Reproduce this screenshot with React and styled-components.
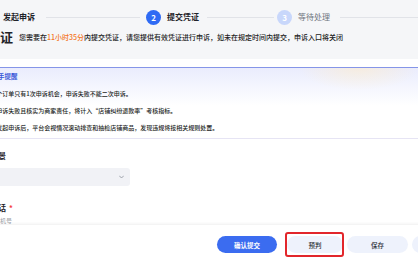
import styled, { createGlobalStyle } from 'styled-components';

const GlobalStyle = createGlobalStyle`
  html, body {
    margin: 0;
    padding: 0;
  }
  body {
    width: 418px;
    height: 258px;
    overflow: hidden;
    background: #f5f6f8;
    font-family: "Noto Sans CJK SC", "Noto Sans", sans-serif;
    color: #1f2329;
  }
  #root {
    width: 418px;
    height: 258px;
    overflow: hidden;
  }
`;

// the page is scrolled sideways, so its left edge sits off screen
const Page = styled.div`
  display: flex;
  flex-direction: column;
  width: 540px;
  height: 258px;
  margin-left: -48px;
`;

const Header = styled.header`
  box-sizing: border-box;
  height: 59px;
  padding: 9px 0 0 9px;
  display: flex;
  flex-direction: column;
  gap: 4px;
`;

const Steps = styled.div`
  display: flex;
  align-items: center;
  height: 16px;
  padding-left: 21px;
`;

const Step = styled.div`
  display: flex;
  align-items: center;
  gap: 6px;
  flex-shrink: 0;
`;

const Circle = styled.span`
  width: 15px;
  height: 15px;
  border-radius: 50%;
  background: ${(p) => p.$bg};
  color: #fff;
  font-size: 8px;
  font-weight: 700;
  display: flex;
  align-items: center;
  justify-content: center;
`;

const StepText = styled.span`
  font-size: 8px;
  line-height: 10px;
  font-weight: ${(p) => (p.$muted ? 400 : 700)};
  color: ${(p) => (p.$muted ? '#6f747e' : '#1f2329')};
`;

const Connector = styled.span`
  height: 1px;
  background: #e1e3e8;
  flex-shrink: 0;
  width: ${(p) => p.$w}px;
  margin: 0 ${(p) => p.$mr}px 0 ${(p) => p.$ml}px;
`;

const TitleRow = styled.div`
  display: flex;
  align-items: center;
  gap: 6px;
`;

const Heading = styled.h2`
  margin: 0;
  font-size: 13px;
  line-height: 16px;
  font-weight: 700;
  white-space: nowrap;
`;

const Desc = styled.p`
  margin: 0;
  font-size: 7px;
  line-height: 10px;
  font-weight: 500;
  color: #222;
  white-space: nowrap;
`;

const Countdown = styled.span`
  color: #f47524;
`;

const Card = styled.main`
  flex: 1;
  background: #fff;
  padding: 8px 0 0 16px;
  overflow: hidden;
`;

const Notice = styled.section`
  width: 520px;
  box-sizing: border-box;
  border: 1px solid #e6e4f4;
  border-top: 1px solid #8595e8;
  border-radius: 3px;
  padding: 0 0 2px 16px;
  background:
    radial-gradient(ellipse 60px 22px at 390px 0, rgba(255, 236, 200, 0.55), rgba(255, 255, 255, 0)),
    linear-gradient(180deg, #eaecfd 0%, #ffffff 38px);
`;

const NoticeTitle = styled.div`
  font-size: 6.5px;
  line-height: 17px;
  font-weight: 700;
  color: #3656d8;
  white-space: nowrap;
`;

const NoticeList = styled.ol`
  margin: 0;
  padding: 0;
  list-style: none;
`;

const NoticeItem = styled.li`
  font-size: 6px;
  line-height: 17px;
  font-weight: 500;
  color: #1a1d22;
  white-space: nowrap;
`;

const Form = styled.form`
  display: flex;
  flex-direction: column;
  padding: 12px 0 0 8px;
`;

const Label = styled.label`
  font-size: 7.5px;
  line-height: 10px;
  font-weight: 700;
  color: #1f2329;
  white-space: nowrap;
  margin-top: ${(p) => p.$mt || 0}px;
`;

const Star = styled.span`
  color: #f53f3f;
  margin-left: 3px;
`;

const Select = styled.div`
  width: 154px;
  height: 18px;
  margin-top: 7px;
  border-radius: 3px;
  background: #f1f2f6;
  display: flex;
  align-items: center;
  justify-content: flex-end;
  padding-right: 6px;
  box-sizing: border-box;
  color: #8a8f99;
`;

const Input = styled.input`
  margin-top: 3px;
  width: 160px;
  height: 9px;
  padding: 0;
  border: none;
  outline: none;
  background: transparent;
  font-family: inherit;
  font-size: 6px;
  line-height: 9px;
  &::placeholder {
    color: #9a9ea6;
  }
`;

const Footer = styled.footer`
  height: 33px;
  box-sizing: border-box;
  background: #fff;
  box-shadow: 0 -1px 3px rgba(0, 0, 0, 0.07);
  display: flex;
  align-items: flex-start;
  gap: 4px;
  padding: 11px 0 0 265px;
  position: relative;
`;

const Button = styled.button`
  position: relative;
  flex-shrink: 0;
  height: 17px;
  width: ${(p) => p.$w}px;
  margin-right: ${(p) => p.$mr || 0}px;
  padding: 0;
  border: none;
  border-radius: 9px;
  font-family: inherit;
  font-size: 6.5px;
  font-weight: ${(p) => (p.$primary ? 700 : 500)};
  color: ${(p) => (p.$primary ? '#fff' : '#2b2f36')};
  background: ${(p) => (p.$primary ? '#3b6cf0' : '#eef2fc')};
  ${(p) =>
    p.$marked &&
    `
    &::after {
      content: '';
      position: absolute;
      top: -4px;
      bottom: -4px;
      left: -2px;
      right: -1px;
      border: 2px solid #e2262b;
      border-radius: 3px;
    }
  `}
`;

const Chevron = () => (
  <svg width="5" height="4" viewBox="0 0 10 7" fill="none">
    <path d="M1 1.5l4 4 4-4" stroke="currentColor" strokeWidth="1.6" strokeLinecap="round" strokeLinejoin="round" />
  </svg>
);

export default function App() {
  return (
    <>
      <GlobalStyle />
      <Page>
        <Header>
          <Steps>
            <Step>
              <Circle $bg="#2f6bf4">1</Circle>
              <StepText>发起申诉</StepText>
            </Step>
            <Connector $w={94} $ml={11} $mr={6} />
            <Step>
              <Circle $bg="#2f6bf4">2</Circle>
              <StepText>提交凭证</StepText>
            </Step>
            <Connector $w={67} $ml={8} $mr={3} />
            <Step>
              <Circle $bg="#c8d7fb">3</Circle>
              <StepText $muted>等待处理</StepText>
            </Step>
            <Connector $w={120} $ml={10} $mr={0} />
          </Steps>
          <TitleRow>
            <Heading>提交凭证</Heading>
            <Desc>
              您需要在<Countdown>11小时35分</Countdown>内提交凭证，请您提供有效凭证进行申诉，如未在规定时间内提交，申诉入口将关闭
            </Desc>
          </TitleRow>
        </Header>
        <Card>
          <Notice>
            <NoticeTitle>小助手提醒</NoticeTitle>
            <NoticeList>
              <NoticeItem>1.每个订单只有1次申诉机会，申诉失败不能二次申诉。</NoticeItem>
              <NoticeItem>2.若申诉失败且核实为商家责任，将计入“店铺纠纷退款率”考核指标。</NoticeItem>
              <NoticeItem>3.您发起申诉后，平台会视情况滚动排查和抽检店铺商品，发现违规将按相关规则处置。</NoticeItem>
            </NoticeList>
          </Notice>
          <Form>
            <Label>申诉场景</Label>
            <Select>
              <Chevron />
            </Select>
            <Label $mt={17}>
              联系电话<Star>*</Star>
            </Label>
            <Input placeholder="请输入手机号" />
          </Form>
        </Card>
        <Footer>
          <Button $primary $w={60} $mr={6}>
            确认提交
          </Button>
          <Button $marked $w={56}>
            预判
          </Button>
          <Button $w={61}>保存</Button>
          <Button $w={60}>取消</Button>
        </Footer>
      </Page>
    </>
  );
}
